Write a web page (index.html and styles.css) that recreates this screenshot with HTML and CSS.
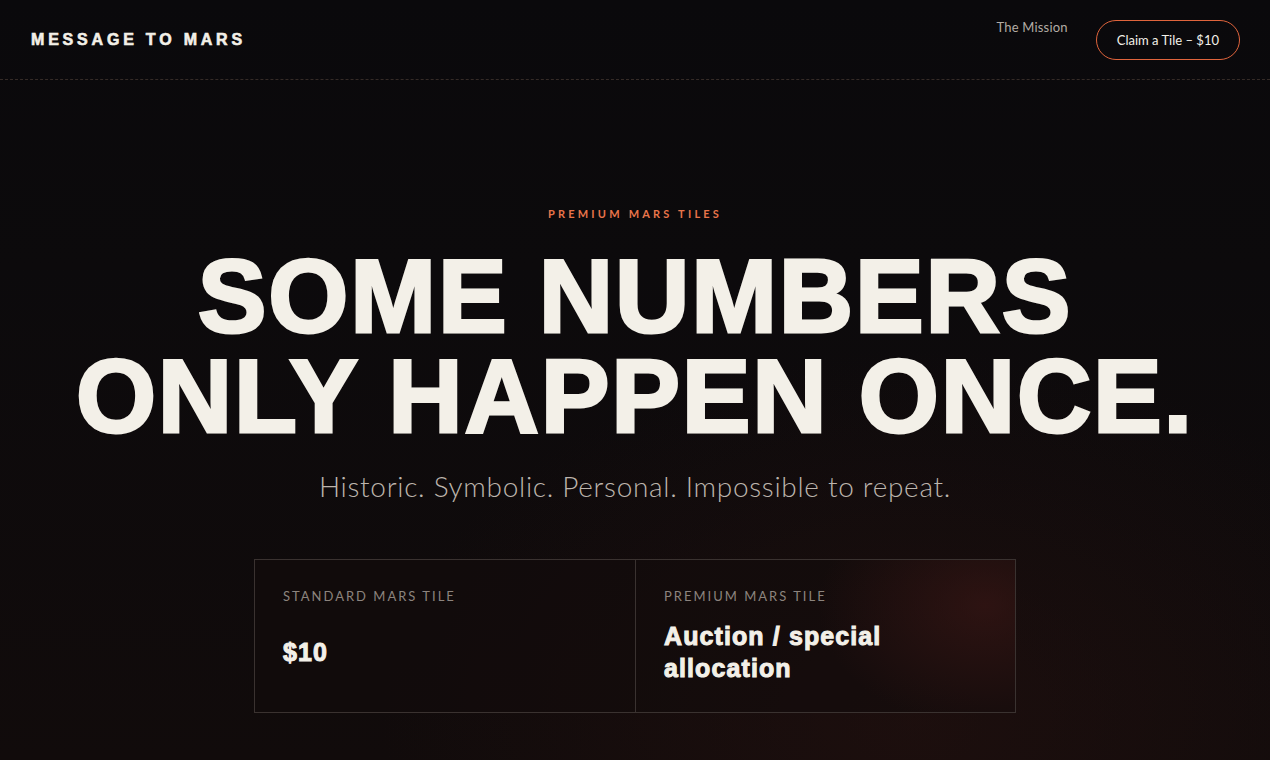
FILE: index.html
```html
<!DOCTYPE html>
<html lang="en">
<head>
    <meta charset="UTF-8">
    <meta name="viewport" content="width=device-width, initial-scale=1.0">
    <title>Message to Mars – Premium Mars Tiles</title>
    <link rel="stylesheet" href="styles.css">
</head>
<body>

    <header class="site-header">
        <a class="logo" href="#">MESSAGE TO MARS</a>
        <nav class="nav">
            <a class="nav-link" href="#">The Mission</a>
            <a class="nav-cta" href="#">Claim a Tile – $10</a>
        </nav>
    </header>

    <main class="hero">
        <p class="eyebrow">PREMIUM MARS TILES</p>
        <h1 class="headline">SOME NUMBERS<br>ONLY HAPPEN ONCE.</h1>
        <p class="subtitle">Historic. Symbolic. Personal. Impossible to repeat.</p>

        <div class="tiles">
            <div class="tile">
                <p class="tile-label">STANDARD MARS TILE</p>
                <div class="tile-value">$10</div>
            </div>
            <div class="tile tile-premium">
                <p class="tile-label">PREMIUM MARS TILE</p>
                <div class="tile-value">Auction / special<br>allocation</div>
            </div>
        </div>
    </main>

</body>
</html>
```

FILE: styles.css
```css
html, body {
    height: 100%;
}
body {
    margin: 0;
    font-family: Lato, "Open Sans", sans-serif;
    color: #f3f0e8;
    background-color: #0a090c;
    background-image:
        radial-gradient(ellipse 60% 70% at 72% 95%, rgba(40, 18, 16, 0.5), rgba(40, 18, 16, 0) 70%),
        linear-gradient(180deg, #0a090c 0%, #0c0a0c 35%, #110b0b 100%);
    overflow: hidden;
}
a {
    text-decoration: none;
    color: inherit;
}
p {
    margin: 0;
}

/* header */
.site-header {
    height: 79px;
    display: flex;
    align-items: center;
    justify-content: space-between;
    padding: 0 30px 0 31px;
    border-bottom: 1px dashed #352b27;
}
.logo {
    font-family: "Liberation Sans", Arial, sans-serif;
    font-weight: 700;
    font-size: 16px;
    letter-spacing: 3.8px;
    color: #f3f0e8;
    -webkit-text-stroke: 0.6px #f3f0e8;
}
.nav {
    display: flex;
    align-items: flex-start;
    gap: 28px;
    align-self: stretch;
    padding-top: 20px;
}
.nav-link {
    font-size: 13px;
    line-height: 15px;
    letter-spacing: 0.2px;
    color: #b3aca4;
}
.nav-cta {
    font-size: 13px;
    line-height: 38px;
    height: 38px;
    padding: 0 20px;
    border: 1px solid #e0643c;
    border-radius: 20px;
    color: #f3f0e8;
}

/* hero */
.hero {
    text-align: center;
    padding-top: 127px;
}
.eyebrow {
    font-size: 11px;
    line-height: 14px;
    font-weight: 700;
    letter-spacing: 3.2px;
    color: #e8744a;
}
.headline {
    margin: 26px 0 0;
    font-family: "Liberation Sans", Arial, sans-serif;
    font-weight: 700;
    font-size: 103px;
    line-height: 100px;
    letter-spacing: 1.8px;
    color: #f3f0e8;
    -webkit-text-stroke: 3px #f3f0e8;
}
.subtitle {
    margin-top: 22px;
    font-size: 28px;
    line-height: 34px;
    font-weight: 300;
    letter-spacing: 0.7px;
    color: #bdb5ad;
}

/* tiles */
.tiles {
    width: 760px;
    margin: 56px auto 0;
    display: grid;
    grid-template-columns: 1fr 1fr;
    border: 1px solid #3a3230;
    text-align: left;
}
.tile {
    display: flex;
    flex-direction: column;
    gap: 16px;
    padding: 28px;
    background-color: rgba(18, 11, 11, 0.6);
}
.tile + .tile {
    border-left: 1px solid #3a3230;
}
.tile-premium {
    background-image: radial-gradient(ellipse 55% 100% at 92% 30%, rgba(62, 24, 22, 0.6), rgba(62, 24, 22, 0) 80%);
}
.tile-label {
    font-size: 13px;
    line-height: 16px;
    letter-spacing: 2px;
    color: #8c847e;
}
.tile-value {
    flex: 1;
    display: flex;
    align-items: center;
    min-height: 64px;
    font-family: "Liberation Sans", Arial, sans-serif;
    font-weight: 700;
    font-size: 25px;
    line-height: 32px;
    letter-spacing: 1.1px;
    color: #f3f0e8;
    -webkit-text-stroke: 1px #f3f0e8;
}
```
